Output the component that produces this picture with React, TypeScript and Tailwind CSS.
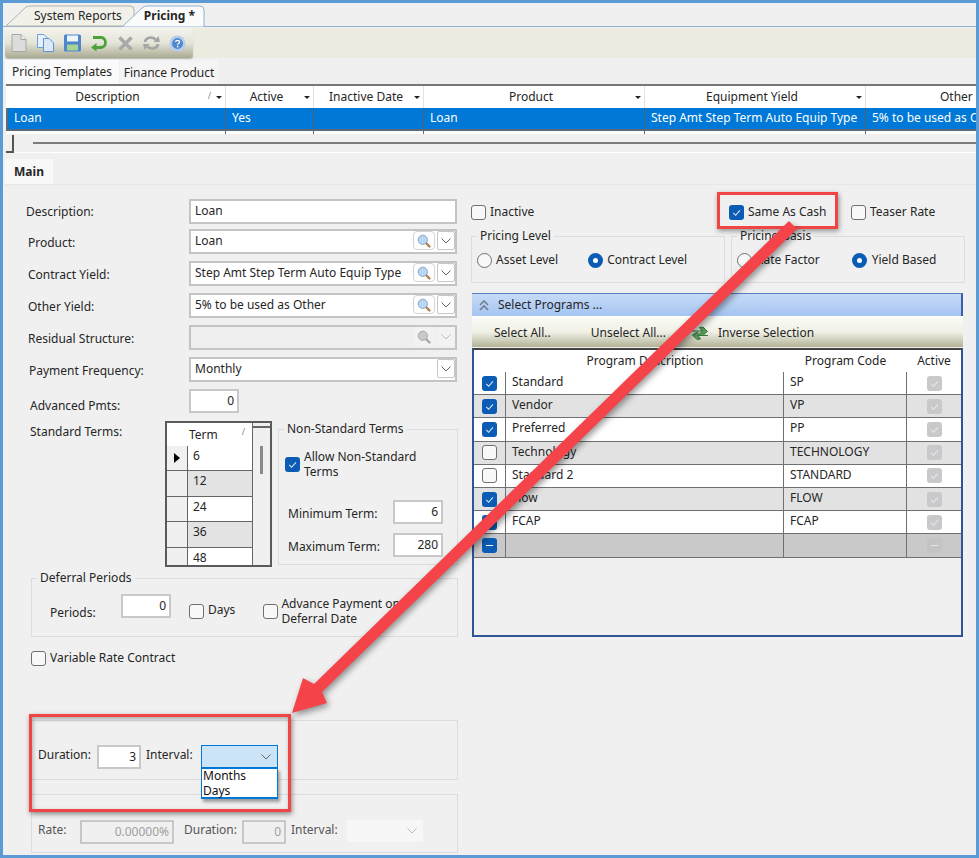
import React from "react";

const gridCols = [
  { w: "w-[220px]", label: "Description", val: "Loan", sort: true, pad: "pr-[16px]" },
  { w: "w-[88px]", label: "Active", val: "Yes", sort: false, pad: "pr-[6px]" },
  { w: "w-[110px]", label: "Inactive Date", val: "", sort: false, pad: "pr-[5px]" },
  { w: "w-[221px]", label: "Product", val: "Loan", sort: false, pad: "pr-[6px]" },
  { w: "w-[221px]", label: "Equipment Yield", val: "Step Amt Step Term Auto Equip Type", sort: false, pad: "pr-[6px]" },
  { w: "w-[212px]", label: "Other Yield", val: "5% to be used as Other", sort: false, pad: "" },
];

const programs = [
  { name: "Standard", code: "SP", on: true },
  { name: "Vendor", code: "VP", on: true },
  { name: "Preferred", code: "PP", on: true },
  { name: "Technology", code: "TECHNOLOGY", on: false },
  { name: "Standard 2", code: "STANDARD", on: false },
  { name: "Flow", code: "FLOW", on: true },
  { name: "FCAP", code: "FCAP", on: true },
];

function Tick() {
  return (
    <svg viewBox="0 0 14 14" className="w-full h-full">
      <path d="M4 7.4 6.2 9.6 10.2 5" fill="none" stroke="#dfe9f6" strokeWidth="1" />
    </svg>
  );
}

function Check({ on = false, muted = false }: { on?: boolean; muted?: boolean }) {
  if (muted) {
    return (
      <div className="w-[15px] h-[15px] rounded-[3px] bg-[#c9c9c9] shrink-0">
        <Tick />
      </div>
    );
  }
  if (on) {
    return (
      <div className="w-[15px] h-[15px] rounded-[3px] bg-[#0a5cb4] shrink-0">
        <Tick />
      </div>
    );
  }
  return <div className="w-[15px] h-[15px] rounded-[3px] border border-[#707070] bg-[#f8f8f8] shrink-0" />;
}

function Radio({ on = false }: { on?: boolean }) {
  if (on) {
    return (
      <div className="w-[15px] h-[15px] rounded-full bg-[#0a5cb4] flex items-center justify-center shrink-0">
        <div className="w-[5px] h-[5px] rounded-full bg-white" />
      </div>
    );
  }
  return <div className="w-[15px] h-[15px] rounded-full border border-[#707070] bg-[#f8f8f8] shrink-0" />;
}

function Chevron({ color = "#666" }: { color?: string }) {
  return (
    <svg width="10" height="6" viewBox="0 0 10 6">
      <path d="M0.5 0.5 5 5 9.5 0.5" fill="none" stroke={color} strokeWidth="1" />
    </svg>
  );
}

function Lens({ off = false }: { off?: boolean }) {
  return (
    <svg width="14" height="14" viewBox="0 0 14 14">
      <path d="M8.5 8.5 12.5 12.5" stroke={off ? "#a8a8a8" : "#b08050"} strokeWidth="2.4" strokeLinecap="round" />
      <circle cx="5.8" cy="5.8" r="4.6" fill={off ? "#c9c9c9" : "#bcd6f2"} stroke={off ? "#aaa" : "#7fa6d2"} strokeWidth="1" />
    </svg>
  );
}

function Lookup({ off = false, lens = true }: { off?: boolean; lens?: boolean }) {
  return (
    <div className="ml-auto flex items-center gap-[2px]">
      {lens && (
        <div className={`w-[22px] h-[19px] rounded-[4px] flex items-center justify-center ${off ? "bg-[#f2f2f2]" : "bg-white border border-[#d4d4d4]"}`}>
          <Lens off={off} />
        </div>
      )}
      <div className={`w-[18px] h-[19px] rounded-[2px] flex items-center justify-center ${off ? "bg-[#f2f2f2]" : "bg-white border border-[#c8c8c8]"}`}>
        <Chevron color={off ? "#bbb" : "#666"} />
      </div>
    </div>
  );
}

function Field({ label, pl, value, lens = true, drop = true, off = false, pt = "pt-[2px]" }: { label: string; pl: string; value?: string; lens?: boolean; drop?: boolean; off?: boolean; pt?: string }) {
  return (
    <div className="flex items-center">
      <div className={`w-[186px] ${pl} ${pt}`}>{label}</div>
      <div className={`w-[268px] h-[25px] border-2 border-[#c4c4c4] flex items-center pl-[4px] pb-[2px] ${off ? "bg-[#efefef]" : "bg-white"}`}>
        <span>{value}</span>
        {drop && <Lookup off={off} lens={lens} />}
      </div>
    </div>
  );
}

function NumBox({ w, value, off = false }: { w: string; value: string; off?: boolean }) {
  return (
    <div className={`${w} h-[24px] border-2 flex items-center justify-end pr-[3px] shrink-0 ${off ? "border-[#c8c8c8] bg-[#f0f0f0] text-[#a0a0a0]" : "border-[#c8c8c8] bg-white"}`}>
      {value}
    </div>
  );
}

function Group({ title, className, children }: { title?: string; className: string; children: React.ReactNode }) {
  return (
    <div className={`border border-[#dcdcdc] ${className}`}>
      {title && <div className="-mt-[8px] ml-[5px] w-fit px-[3px] bg-[#f0f0f0] leading-[14px] h-[14px]">{title}</div>}
      {children}
    </div>
  );
}

function HeaderArrow() {
  return <div className="w-0 h-0 border-x-[3px] border-x-transparent border-t-[3px] border-t-[#222]" />;
}

function Toolbar() {
  return (
    <div className="flex items-center w-[188px] h-[30px] rounded-b-[3px] rounded-tr-[3px] bg-gradient-to-b from-[#f4f4ee] via-[#e4e4d8] to-[#abab93] pl-[5px] gap-[8px] shadow-[0_1px_1px_rgba(0,0,0,0.25)]">
      <svg width="18" height="20" viewBox="0 0 18 20">
        <path d="M2 1.5H11L16 6.5V18.5H2Z" fill="#dcdcdc" stroke="#a6a6a6" />
        <path d="M11 1.5V6.5H16" fill="#efefef" stroke="#a6a6a6" />
      </svg>
      <svg width="19" height="20" viewBox="0 0 19 20">
        <path d="M1.5 1.5H8L11 4.5V14.5H1.5Z" fill="#e6effb" stroke="#6f9fd8" />
        <path d="M7.5 5.5H13L17.5 10V18.5H7.5Z" fill="#dce9f9" stroke="#5f94d4" />
      </svg>
      <svg width="19" height="20" viewBox="0 0 19 20">
        <rect x="1" y="1.5" width="17" height="17" rx="1.5" fill="#4f86cc" />
        <rect x="4" y="2.5" width="11" height="6" fill="#eef4fc" />
        <rect x="4" y="11.5" width="11" height="6" fill="#a6d492" />
      </svg>
      <svg width="18" height="18" viewBox="0 0 18 18">
        <path d="M3 3.5H11C17 3.5 17 13.5 11 13.5H4" fill="none" stroke="#4aa238" strokeWidth="2.8" />
        <path d="M6.5 9V17.5L1 13.5Z" fill="#4aa238" />
      </svg>
      <svg width="17" height="17" viewBox="0 0 17 17" className="ml-[1px]">
        <path d="M2.5 2.5 14.5 14.5M14.5 2.5 2.5 14.5" stroke="#a8a8a8" strokeWidth="3.4" />
      </svg>
      <svg width="19" height="18" viewBox="0 0 19 18">
        <path d="M3 8C3.5 3.5 10 2 13.5 5.5" fill="none" stroke="#a4a4a4" strokeWidth="2.6" />
        <path d="M11.5 8 18 8 16.5 2Z" fill="#a4a4a4" />
        <path d="M16 10C15.5 14.5 9 16 5.5 12.5" fill="none" stroke="#a4a4a4" strokeWidth="2.6" />
        <path d="M7.5 10 1 10 2.5 16Z" fill="#a4a4a4" />
      </svg>
      <svg width="17" height="17" viewBox="0 0 17 17">
        <circle cx="8.5" cy="8.5" r="8" fill="#b4cdec" />
        <circle cx="8.5" cy="8.5" r="5.4" fill="#4f86cc" />
        <path d="M6.6 7C6.8 4.8 10.6 4.9 10.5 7C10.4 8.5 8.6 8.4 8.6 9.8" fill="none" stroke="#fff" strokeWidth="1.3" />
        <rect x="7.9" y="10.8" width="1.5" height="1.5" fill="#fff" />
      </svg>
    </div>
  );
}

function Tabs() {
  return (
    <div className="relative h-[24px] border-b border-[#8fb0d2] text-[12px]">
      <svg className="absolute left-0 top-0" width="210" height="24" viewBox="0 0 210 24">
        <path d="M3 23 23 4Q25 3 28 3H127Q131 3 131 7V23Z" fill="#f1f1ea" stroke="#b3b3a4" />
        <path d="M119 24 139 5Q141 3 144 3H197Q201 3 201 7V24Z" fill="#fbfbfb" stroke="#8fb0d2" />
      </svg>
      <div className="relative flex items-center h-[23px] pl-[31px] pt-[2px]">
        <span>System Reports</span>
        <span className="ml-[22px] font-bold">Pricing *</span>
      </div>
    </div>
  );
}

export default function App() {
  return (
    <div className="relative w-[979px] h-[858px] overflow-hidden font-['Noto_Sans',sans-serif] text-[12px] text-[#262626]">
      <div className="w-full h-full border-[3px] border-[#5b9bd5] bg-[#f0f0f0] flex flex-col">
        <Tabs />
        <div className="ml-[2px] h-[30px] mt-[1px] bg-[#ebebdf]">
          <Toolbar />
        </div>

        {/* upper tabs */}
        <div className="flex mt-[2px] ml-[2px] h-[24px]">
          <div className="w-[114px] bg-[#fafafa] flex items-center justify-center">Pricing Templates</div>
          <div className="w-[98px] ml-[1px] mt-[1px] bg-[#f5f5f5] flex items-center justify-center">Finance Product</div>
        </div>

        {/* templates grid */}
        <div className="ml-[3px] border-t-2 border-[#777] overflow-hidden">
          <div className="flex h-[22px] bg-white w-[1200px]">
            {gridCols.map((c) => (
              <div key={c.label} className={`${c.w} ${c.pad} relative flex items-center justify-center border-r border-[#e2e2e2]`}>
                <span>{c.label}</span>
                {c.sort && <span className="absolute right-[14px] top-[3px] text-[9px] text-[#888]">/</span>}
                <div className="absolute right-[3px] top-[10px]">
                  <HeaderArrow />
                </div>
              </div>
            ))}
          </div>
          <div className="flex h-[23px] w-[1200px] bg-[#0078d7] text-white border-l-2 border-b-2 border-[#5a6a78]">
            {gridCols.map((c) => (
              <div key={c.label} className={`${c.w} first:w-[218px] border-r border-[#54606c] pl-[6px] leading-[19px] whitespace-nowrap overflow-hidden`}>
                {c.val}
              </div>
            ))}
          </div>
          <div className="flex h-[3px] w-[1200px] bg-white">
            {gridCols.map((c) => (
              <div key={c.label} className={`${c.w} border-r border-[#666]`} />
            ))}
          </div>
        </div>

        {/* horizontal scroller */}
        <div className="relative h-[19px] flex items-center border-b border-white ml-[3px]">
          <div className="w-[8px] h-[18px] border-r-2 border-b-2 border-[#555] mt-[1px] shrink-0" />
          <div className="ml-[19px] flex-1 h-[2px] bg-[#7c7c7c]" />
        </div>

        {/* main tab */}
        <div className="flex h-[32px] ml-[2px] pt-[6px] border-b border-[#e6e6e6]">
          <div className="w-[48px] bg-[#f8f8f8] font-bold flex items-center justify-center">Main</div>
        </div>

        <div className="flex flex-1 min-h-0">
          {/* left column */}
          <div className="w-[462px] pt-[14px] shrink-0">
            <div className="flex flex-col gap-[7px]">
              <div className="-mb-[2px]">
                <Field label="Description:" pl="pl-[23px]" value="Loan" drop={false} pt="pt-0" />
              </div>
              <Field label="Product:" pl="pl-[25px]" value="Loan" />
              <Field label="Contract Yield:" pl="pl-[25px]" value="Step Amt Step Term Auto Equip Type" />
              <Field label="Other Yield:" pl="pl-[25px]" value="5% to be used as Other" />
              <Field label="Residual Structure:" pl="pl-[25px]" off />
              <Field label="Payment Frequency:" pl="pl-[26px]" value="Monthly" lens={false} />
              <div className="flex items-start h-[24px]">
                <div className="w-[186px] pl-[27px] pt-[8px]">Advanced Pmts:</div>
                <NumBox w="w-[50px]" value="0" />
              </div>
            </div>

            <div className="flex mt-[8px] h-[146px]">
              <div className="w-[162px] pl-[27px] pt-[2px]">Standard Terms:</div>
              <div className="w-[107px] h-[146px] border-2 border-[#5a5a5a] flex overflow-hidden shrink-0">
                <div className="w-[85px] shrink-0">
                  <div className="h-[23px] bg-white relative flex items-center pl-[22px]">
                    Term
                    <span className="absolute right-[7px] top-[2px] text-[9px] text-[#888]">/</span>
                  </div>
                  {["6", "12", "24", "36", "48"].map((t, i) => (
                    <div key={t} className="flex h-[25.4px] border-b border-[#666]">
                      <div className="w-[21px] border-r border-[#666] flex items-center justify-center">
                        {i === 0 && <div className="w-0 h-0 border-y-[5px] border-y-transparent border-l-[6px] border-l-black" />}
                      </div>
                      <div className={`flex-1 pl-[5px] pt-[1px] ${i % 2 ? "bg-[#e3e3e3]" : "bg-white"}`}>{t}</div>
                    </div>
                  ))}
                </div>
                <div className="flex-1 border-l border-[#666] flex flex-col items-center">
                  <div className="w-full h-[5px] border-b-2 border-[#666]" />
                  <div className="w-[3px] h-[28px] bg-[#8a8a8a] mt-[18px]" />
                </div>
              </div>
              <Group title="Non-Standard Terms" className="ml-[6px] mt-[8px] w-[180px] h-[136px]">
                <div className="pl-[6px]">
                  <div className="flex gap-[4px] mt-[14px] leading-[14.5px] items-start">
                    <div className="mt-[7px]">
                      <Check on />
                    </div>
                    <div>
                      Allow Non-Standard
                      <br />
                      Terms
                    </div>
                  </div>
                  <div className="flex items-center mt-[21px]">
                    <div className="w-[108px] pl-[3px] pt-[3px]">Minimum Term:</div>
                    <NumBox w="w-[50px]" value="6" />
                  </div>
                  <div className="flex items-center mt-[9px]">
                    <div className="w-[108px] pl-[3px] pt-[3px]">Maximum Term:</div>
                    <NumBox w="w-[50px]" value="280" />
                  </div>
                </div>
              </Group>
            </div>

            <Group title="Deferral Periods" className="ml-[28px] mt-[11px] w-[427px] h-[59px]">
              <div className="flex items-start mt-[9px]">
                <div className="w-[89px] pl-[18px] pt-[10px]">Periods:</div>
                <NumBox w="w-[50px]" value="0" />
                <div className="ml-[18px] mt-[10px]">
                  <Check />
                </div>
                <div className="ml-[4px] mt-[7px]">Days</div>
                <div className="ml-[28px] mt-[10px]">
                  <Check />
                </div>
                <div className="ml-[3px] mt-[3px] leading-[14.5px]">
                  Advance Payment on
                  <br />
                  Deferral Date
                </div>
              </div>
            </Group>

            <div className="flex items-center gap-[4px] ml-[28px] mt-[14px] h-[15px]">
              <Check />
              <span className="-mt-[1px]">Variable Rate Contract</span>
            </div>

            <Group className="ml-[28px] mt-[54px] w-[427px] h-[60px]">
              <div className="flex items-start pt-[24px] pl-[6px]">
                <div className="w-[59px] pt-[1px]">Duration:</div>
                <NumBox w="w-[44px]" value="3" />
                <div className="ml-[5px] w-[55px] pt-[1px]">Interval:</div>
                <div className="w-[77px] h-[23px] border border-[#0078d7] bg-[#cce4f7] flex items-center justify-end pr-[6px]">
                  <Chevron />
                </div>
              </div>
            </Group>

            <Group className="ml-[28px] mt-[14px] w-[427px] h-[59px]">
              <div className="flex items-start pt-[25px] pl-[6px] text-[#555]">
                <div className="w-[42px] pt-[1px]">Rate:</div>
                <NumBox w="w-[94px]" value="0.00000%" off />
                <div className="ml-[10px] w-[58px] pt-[1px]">Duration:</div>
                <NumBox w="w-[44px]" value="0" off />
                <div className="ml-[5px] w-[56px] pt-[1px]">Interval:</div>
                <div className="w-[76px] h-[22px] bg-[#f7f7f7] flex items-center justify-end pr-[6px]">
                  <Chevron color="#bbb" />
                </div>
              </div>
            </Group>
          </div>

          {/* right column */}
          <div className="flex-1 min-w-0">
            <div className="flex items-center mt-[20px] h-[15px] pl-[6px] whitespace-nowrap">
              <div className="w-[258px] flex items-center shrink-0">
                <Check />
                <span className="ml-[4px] -mt-[2px]">Inactive</span>
              </div>
              <div className="w-[122px] flex items-center shrink-0">
                <Check on />
                <span className="ml-[4px] -mt-[2px]">Same As Cash</span>
              </div>
              <Check />
              <span className="ml-[4px] -mt-[2px]">Teaser Rate</span>
            </div>

            <div className="flex ml-[6px] mt-[16px] gap-[6px]">
              <Group title="Pricing Level" className="w-[254px] h-[47px]">
                <div className="flex items-center mt-[9px] pl-[5px] h-[16px]">
                  <Radio />
                  <span className="ml-[4px]">Asset Level</span>
                  <div className="ml-[30px]">
                    <Radio on />
                  </div>
                  <span className="ml-[4px]">Contract Level</span>
                </div>
              </Group>
              <Group title="Pricing Basis" className="w-[234px] h-[47px]">
                <div className="flex items-center mt-[9px] pl-[5px] h-[16px]">
                  <Radio />
                  <span className="ml-[4px]">Rate Factor</span>
                  <div className="ml-[32px]">
                    <Radio on />
                  </div>
                  <span className="ml-[5px]">Yield Based</span>
                </div>
              </Group>
            </div>

            <div className="ml-[7px] mt-[10px] w-[491px]">
              <div className="h-[23px] flex items-center bg-gradient-to-b from-[#c6dbf7] to-[#a5c4f1] border-t border-r-2 border-[#5a7fc0] border-r-[#3a5ea8] pl-[7px]">
                <svg width="10" height="11" viewBox="0 0 10 11">
                  <path d="M1 5 5 1 9 5M1 10 5 6 9 10" fill="none" stroke="#6f7f92" strokeWidth="1.6" />
                </svg>
                <span className="ml-[9px]">Select Programs ...</span>
              </div>
              <div className="h-[31px] flex items-center bg-gradient-to-b from-[#fbfbf7] via-[#f0f0e6] to-[#b3b398] border-t border-white pl-[22px] pt-[2px]">
                <span>Select All..</span>
                <span className="ml-[40px]">Unselect All...</span>
                <svg width="18" height="16" viewBox="0 0 18 16" className="ml-[25px]">
                  <path d="M1 6H11L8.5 2.5 12 2 16.5 6.5 12 9.5 8.5 9 11 6.5" fill="#5a9a5a" stroke="#2f7a3f" />
                  <path d="M17 10.5H7L9.5 14 6 14.5 1.5 10 6 7" fill="#5a9a5a" stroke="#2f7a3f" />
                </svg>
                <span className="ml-[9px]">Inverse Selection</span>
              </div>
              <div className="mt-[1px] h-[289px] border-2 border-[#2f5597] border-t-[#444] bg-[#f0f0f0] overflow-hidden">
                <div className="grid grid-cols-[32px_278px_123px_1fr] h-[22px] bg-white items-center text-center">
                  <div />
                  <div>Program Description</div>
                  <div>Program Code</div>
                  <div>Active</div>
                </div>
                {programs.map((p, i) => (
                  <div key={p.code} className={`grid grid-cols-[32px_278px_123px_1fr] h-[23.2px] border-b border-[#707070] ${i % 2 ? "bg-[#e2e2e2]" : "bg-white"}`}>
                    <div className="border-r border-[#707070] flex items-center justify-center">
                      <Check on={p.on} />
                    </div>
                    <div className="border-r border-[#707070] pl-[6px] leading-[19px]">{p.name}</div>
                    <div className="border-r border-[#707070] pl-[6px] leading-[19px]">{p.code}</div>
                    <div className="flex items-center justify-center">
                      <Check muted />
                    </div>
                  </div>
                ))}
                <div className="grid grid-cols-[32px_278px_123px_1fr] h-[23.2px] border-b border-[#707070] bg-[#c9c9c9]">
                  <div className="border-r border-[#707070] flex items-center justify-center">
                    <div className="w-[15px] h-[15px] rounded-[3px] bg-[#0a5cb4] flex items-center justify-center">
                      <div className="w-[7px] h-[1px] bg-white" />
                    </div>
                  </div>
                  <div className="border-r border-[#707070]" />
                  <div className="border-r border-[#707070]" />
                  <div className="flex items-center justify-center">
                    <div className="w-[15px] h-[15px] rounded-[3px] bg-[#c4c4c4] flex items-center justify-center">
                      <div className="w-[7px] h-[1px] bg-[#e6e6e6]" />
                    </div>
                  </div>
                </div>
              </div>
            </div>
          </div>
        </div>
      </div>

      {/* open dropdown list */}
      <div className="absolute left-[201px] top-[768px] w-[77px] h-[31px] bg-white border border-[#0078d7] border-b-2 pl-[1px] leading-[14.5px] text-[12px] text-[#111] shadow-[2px_3px_3px_rgba(0,0,0,0.35)]">
        <div>Months</div>
        <div>Days</div>
      </div>

      {/* callout annotations */}
      <div className="absolute left-[29px] top-[714px] w-[262px] h-[98px] border-[3px] border-[#f14444] shadow-[1px_2px_5px_rgba(0,0,0,0.45),inset_1px_2px_4px_rgba(0,0,0,0.3)]" />
      <div className="absolute left-[717px] top-[192px] w-[121px] h-[37px] border-[3px] border-[#f14444] shadow-[1px_2px_5px_rgba(0,0,0,0.4)]" />
      <svg className="absolute left-0 top-0 drop-shadow-[2px_3px_3px_rgba(0,0,0,0.4)]" width="979" height="858" viewBox="0 0 979 858">
        <path d="M292 713 303 678 314 684 789 221 797 229 322 692 327 703Z" fill="#f5434a" />
      </svg>
    </div>
  );
}
